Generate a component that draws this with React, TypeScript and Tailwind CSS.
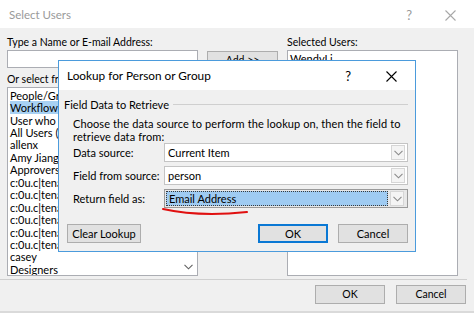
import React from 'react';

const listItems = [
  'People/Groups',
  'Workflow Lookup for a User...',
  'User who created current item',
  'All Users (windows)',
  'allenx',
  'Amy Jiang',
  'Approvers',
  'c:0u.c|tenant|0a1b2c',
  'c:0u.c|tenant|1b2c3d',
  'c:0u.c|tenant|2c3d4e',
  'c:0u.c|tenant|3d4e5f',
  'c:0u.c|tenant|4e5f6a',
  'c:0u.c|tenant|5f6a7b',
  'casey',
  'Designers',
];

const Chevron = ({ className = '' }: { className?: string }) => (
  <svg width="9" height="6" viewBox="0 0 9 6" className={className}>
    <path d="M0.5 0.8 L4.5 4.8 L8.5 0.8" fill="none" stroke="currentColor" strokeWidth="1.1" />
  </svg>
);

const CloseX = ({ className = '' }: { className?: string }) => (
  <svg width="11" height="11" viewBox="0 0 11 11" className={className}>
    <path d="M0.5 0.5 L10.5 10.5 M10.5 0.5 L0.5 10.5" fill="none" stroke="currentColor" strokeWidth="1.1" />
  </svg>
);

const Combo = ({ value, selected = false }: { value: string; selected?: boolean }) => (
  <div
    className={`w-[244px] h-[19px] flex items-center border ${
      selected ? 'border-[#9a9a9a] bg-[#e8e8e8] p-[1px]' : 'border-[#c4c4c4] bg-white'
    }`}
  >
    <div
      className={`flex-1 h-full flex items-center ${
        selected ? 'bg-[#9fcbf2] border border-dotted border-[#3a3a3a] pl-[2px]' : 'pl-[3px]'
      }`}
    >
      {value}
    </div>
    <div className="w-[14px] h-[15px] mx-[2px] flex items-center justify-center border border-[#d6d6d6] bg-[#f4f4f4] text-[#8a8a8a]">
      <Chevron />
    </div>
  </div>
);

const Button = ({ label, width, primary = false }: { label: string; width: string; primary?: boolean }) => (
  <div
    className={`${width} h-[19px] flex items-center justify-center bg-[#e1e1e1] text-black ${
      primary ? 'border-2 border-[#0a78d4]' : 'border border-[#adadad]'
    }`}
  >
    {label}
  </div>
);

export default function App() {
  return (
    <div className="w-[474px] h-[324px] bg-white relative overflow-hidden text-[10.5px] text-black font-['Lato','Liberation_Sans',sans-serif] leading-none">
      {/* Title bar */}
      <div className="h-[28px] flex items-center pt-[2px] pl-[9px] pr-[18px] text-[#9a9a9a]">
        <span className="text-[11.5px]">Select Users</span>
        <span className="ml-auto text-[13px] mr-[33px]">?</span>
        <CloseX className="text-[#a8a8a8]" />
      </div>

      {/* Body */}
      <div className="h-[285px] bg-[#f0f0f0] border-b-2 border-[#dadada] flex flex-col">
        <div className="flex pt-[7px] pl-[7px]">
          {/* Left column */}
          <div className="w-[191px] flex flex-col">
            <div className="h-[15px] flex items-center">Type a Name or E-mail Address:</div>
            <div className="h-[18px] bg-white border border-[#abadb3]" />
            <div className="h-[15px] mt-[4px] flex items-center">Or select from list:</div>
            <div className="h-[189px] bg-white border border-[#abadb3] flex">
              <div className="flex-1 pl-[2px] pt-[1px] overflow-hidden whitespace-nowrap text-[11px]">
                {listItems.map((item, i) => (
                  <div
                    key={i}
                    className={`h-[12.45px] flex items-center ${i === 1 ? 'bg-[#a8d1f3]' : ''}`}
                  >
                    {item}
                  </div>
                ))}
              </div>
              <div className="w-[17px] flex flex-col justify-end items-center pb-[5px] text-[#606060]">
                <Chevron />
              </div>
            </div>
          </div>

          {/* Middle column */}
          <div className="w-[71px] ml-[9px] pt-[16px]">
            <div className="h-[18px] flex items-center justify-center bg-[#e1e1e1] border border-[#adadad]">Add &gt;&gt;</div>
          </div>

          {/* Right column */}
          <div className="w-[171px] ml-[9px] flex flex-col">
            <div className="h-[15px] flex items-center">Selected Users:</div>
            <div className="h-[226px] bg-white border border-[#abadb3] pl-[2px] pt-[2px] text-[11px]">WendyLi</div>
          </div>
        </div>

        <div className="mt-[3px] w-[467px] h-px bg-[#cfcfcf]" />

        <div className="flex justify-end gap-[11px] pr-[8px] mt-[5px]">
          <Button label="OK" width="w-[70px]" />
          <Button label="Cancel" width="w-[70px]" />
        </div>
      </div>

      {/* Lookup dialog (overlay) */}
      <div className="absolute left-[58px] top-[60px] w-[358px] h-[192px] border border-[#4b9bdc] bg-[#f0f0f0] flex flex-col text-[11px]">
        <div className="h-[29px] bg-white flex items-center pt-[1px] pl-[8px] pr-[18px]">
          <span className="text-[11.8px]">Lookup for Person or Group</span>
          <span className="ml-auto text-[13px] mr-[35px]">?</span>
          <CloseX />
        </div>

        <div className="flex-1 flex flex-col pl-[5px] pr-[7px]">
          <div className="flex items-center mt-[7px] h-[14px]">
            <span className="pr-[4px]">Field Data to Retrieve</span>
            <div className="flex-1 h-px bg-[#cfcfcf]" />
          </div>

          <div className="pl-[9px] mt-[6px] leading-[13px] tracking-[0.1px]">
            <div>Choose the data source to perform the lookup on, then the field to</div>
            <div>retrieve data from:</div>
          </div>

          <div className="pl-[9px] flex flex-col gap-[4px]">
            <div className="flex items-center">
              <span className="w-[91px]">Data source:</span>
              <Combo value="Current Item" />
            </div>
            <div className="flex items-center">
              <span className="w-[91px]">Field from source:</span>
              <Combo value="person" />
            </div>
            <div className="flex items-center">
              <span className="w-[91px]">Return field as:</span>
              <Combo value="Email Address" selected />
            </div>
          </div>

          <div className="flex items-center mt-[16px] pl-[3px]">
            <Button label="Clear Lookup" width="w-[74px]" />
            <div className="ml-auto flex gap-[10px]">
              <Button label="OK" width="w-[70px]" primary />
              <Button label="Cancel" width="w-[70px]" />
            </div>
          </div>
        </div>

        {/* hand-drawn red underline */}
        <svg className="absolute left-0 top-0 pointer-events-none" width="358" height="192">
          <path d="M104 148 Q140 156 188 151" fill="none" stroke="#e01010" strokeWidth="2" strokeLinecap="round" />
        </svg>
      </div>
    </div>
  );
}
